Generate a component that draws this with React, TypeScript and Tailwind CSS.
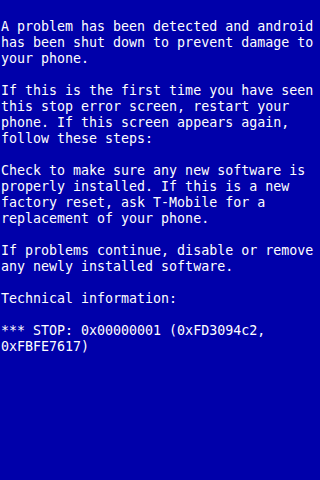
import React from "react";

const paragraphs: string[][] = [
  [
    "A problem has been detected and android",
    "has been shut down to prevent damage to",
    "your phone.",
  ],
  [
    "If this is the first time you have seen",
    "this stop error screen, restart your",
    "phone. If this screen appears again,",
    "follow these steps:",
  ],
  [
    "Check to make sure any new software is",
    "properly installed. If this is a new",
    "factory reset, ask T-Mobile for a",
    "replacement of your phone.",
  ],
  [
    "If problems continue, disable or remove",
    "any newly installed software.",
  ],
  ["Technical information:"],
  ["*** STOP: 0x00000001 (0xFD3094c2,", "0xFBFE7617)"],
];

export default function App() {
  return (
    <div
      className="w-[320px] h-[480px] bg-[#0000aa] text-white pt-[19px] pl-[1px] text-[13.3px] leading-[16px] whitespace-pre overflow-hidden"
      style={{ fontFamily: '"DejaVu Sans Mono", monospace' }}
    >
      <div className="flex flex-col gap-[16px]">
        {paragraphs.map((p, i) => (
          <div key={i} className="flex flex-col">
            {p.map((line, j) => (
              <div key={j}>{line}</div>
            ))}
          </div>
        ))}
      </div>
    </div>
  );
}
